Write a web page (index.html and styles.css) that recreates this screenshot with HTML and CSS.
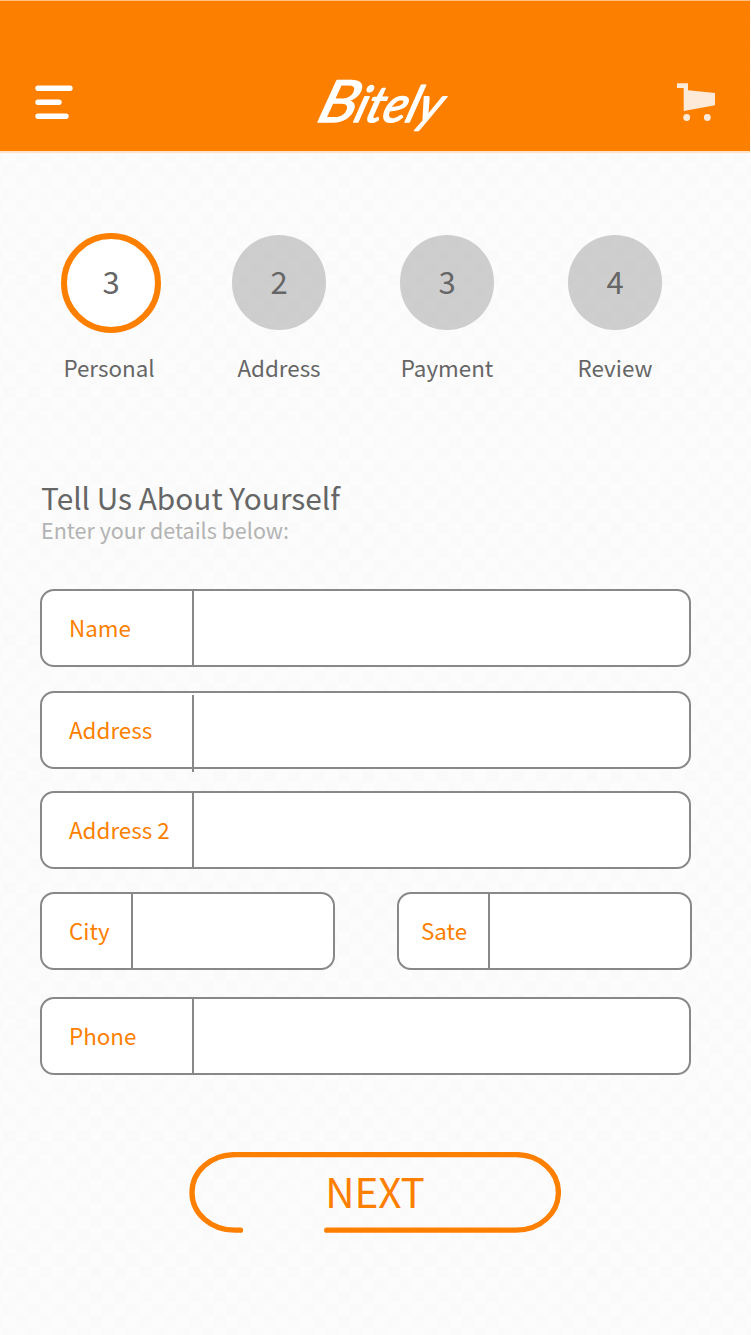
FILE: index.html
```html
<!DOCTYPE html>
<html lang="en">
<head>
<meta charset="utf-8">
<title>Bitely</title>
<link rel="stylesheet" href="styles.css">
</head>
<body>
<header class="header">
  <svg class="menu" width="40" height="36" viewBox="0 0 40 36" stroke="#fff" stroke-width="5.4" stroke-linecap="round"><path d="M4 5.2H36M4 19.2H25M4 33.2H32"/></svg>
  <svg class="logo" width="150" height="82" viewBox="0 0 150 82"><text class="logo-text" transform="translate(9 52) skewX(-18)"><tspan class="logo-cap" x="0" textLength="38" lengthAdjust="spacingAndGlyphs">B</tspan><tspan x="37" textLength="86" lengthAdjust="spacingAndGlyphs">itely</tspan></text></svg>
  <svg class="cart" width="39" height="39" viewBox="0 0 39 39" fill="#feead8"><path d="M0 .3H11V7.3L38 10V22.3L6.7 28V5H0Z"/><circle cx="9.7" cy="34.5" r="3.4"/><circle cx="30.3" cy="34.5" r="3.4"/></svg>
</header>
<main class="content">
  <ol class="steps">
    <li class="step step-active"><span class="circle">3</span><span class="label">Personal</span></li>
    <li class="step"><span class="circle">2</span><span class="label">Address</span></li>
    <li class="step"><span class="circle">3</span><span class="label">Payment</span></li>
    <li class="step"><span class="circle">4</span><span class="label">Review</span></li>
  </ol>
  <h1 class="title">Tell Us About Yourself</h1>
  <p class="subtitle">Enter your details below:</p>
  <form class="form">
    <label class="field field-name"><span class="caption">Name</span></label>
    <label class="field field-address"><span class="caption">Address</span></label>
    <label class="field field-address2"><span class="caption">Address 2</span></label>
    <div class="pair">
      <label class="field field-city"><span class="caption">City</span></label>
      <label class="field field-state"><span class="caption">Sate</span></label>
    </div>
    <label class="field field-phone"><span class="caption">Phone</span></label>
    <button class="next" type="button">
      <svg class="next-outline" width="372" height="82" viewBox="189 1152 372 82" fill="none" stroke="#fd7f00" stroke-width="5.3" stroke-linecap="round"><path d="M240.5 1230.2H235C211 1230.2 192 1213.5 192 1192.4S211 1154.6 235 1154.6H516C540 1154.6 558.4 1171.5 558.4 1192.4S540 1230.2 516 1230.2H326.7"/></svg>
      <span class="next-text">NEXT</span>
    </button>
  </form>
</main>
</body>
</html>
```
FILE: styles.css
```css
* { box-sizing: border-box; }
body {
  margin: 0;
  width: 751px;
  height: 1335px;
  overflow: hidden;
  font-family: "Noto Sans CJK SC", "Noto Sans", sans-serif;
  color: #666;
  background: conic-gradient(#fafafa 25%, #fcfcfc 0 50%, #fafafa 0 75%, #fcfcfc 0) 2.6px 150.1px / 24.8px 24.8px;
}
.header {
  width: 750px;
  height: 153px;
  padding: 0 34px;
  display: flex;
  justify-content: space-between;
  align-items: flex-start;
  background: #fd7f00;
  border-top: 1px solid #ffc080;
  border-bottom: 2px solid #ffe3c8;
}
.menu { margin-top: 82px; }
.logo { margin: 69px 0 0 10px; overflow: visible; }
.cart { margin-top: 82px; }
.logo-text {
  font-family: "Lato", cursive;
  font-size: 50px;
  font-style: italic;
  font-weight: 400;
  fill: #fff;
  stroke: #fff;
  stroke-width: 1.4px;
  stroke-linejoin: round;
}
.logo-cap { font-size: 58px; }
.content { padding-left: 40px; }
.steps {
  list-style: none;
  margin: 79px 0 0 -13px;
  padding: 0;
  display: grid;
  grid-template-columns: repeat(4, 168px);
}
.step { display: flex; flex-direction: column; align-items: center; }
.circle {
  width: 94.4px;
  height: 94.4px;
  margin: 3.4px 0 22px;
  padding-bottom: 3px;
  border-radius: 50%;
  display: flex;
  align-items: center;
  justify-content: center;
  background: rgba(182, 182, 182, .66);
  font-size: 31px;
  line-height: 40px;
}
.step-active .circle {
  width: 100px;
  height: 100px;
  margin: .6px 0 19.2px;
  background: #fff;
  border: 6px solid #fd7f00;
}
.label { font-size: 22.4px; line-height: 30px; }
.step-active .label { margin-left: -4px; }
.title {
  margin: 97.6px 0 0 1px;
  font-size: 29.8px;
  line-height: 36px;
  font-weight: 400;
}
.subtitle {
  margin: 1px 0 0 1px;
  font-size: 21.5px;
  line-height: 28px;
  color: #b3b3b3;
}
.form { margin-top: 44.4px; width: 652px; }
.field {
  display: flex;
  width: 651px;
  height: 78px;
  background: #fff;
  border: 2px solid #888;
  border-radius: 14px;
}
.caption {
  width: 152px;
  padding-left: 27px;
  border-right: 2px solid #888;
  font-size: 22.4px;
  line-height: 73px;
  color: #fd7f00;
  white-space: nowrap;
}
.field-address { margin-top: 24px; }
.field-address .caption {
  height: 77px;
  margin-top: 2px;
  line-height: 69px;
}
.field-address2 { margin-top: 22px; }
.pair { display: flex; gap: 62px; margin-top: 23px; }
.pair .field { width: 295px; }
.field-city .caption { width: 91px; }
.field-state .caption { width: 91px; padding-left: 22px; }
.field-phone { margin-top: 27px; }
.next {
  display: grid;
  place-items: center;
  width: 372px;
  height: 82px;
  margin: 77px 0 0 149px;
  padding: 0;
  border: 0;
  background: none;
  font: 40.5px/50px "Noto Sans CJK SC", "Noto Sans", sans-serif;
  color: #fd7f00;
}
.next-outline, .next-text { grid-area: 1 / 1; }
.next-text { margin-bottom: 4px; }
```
